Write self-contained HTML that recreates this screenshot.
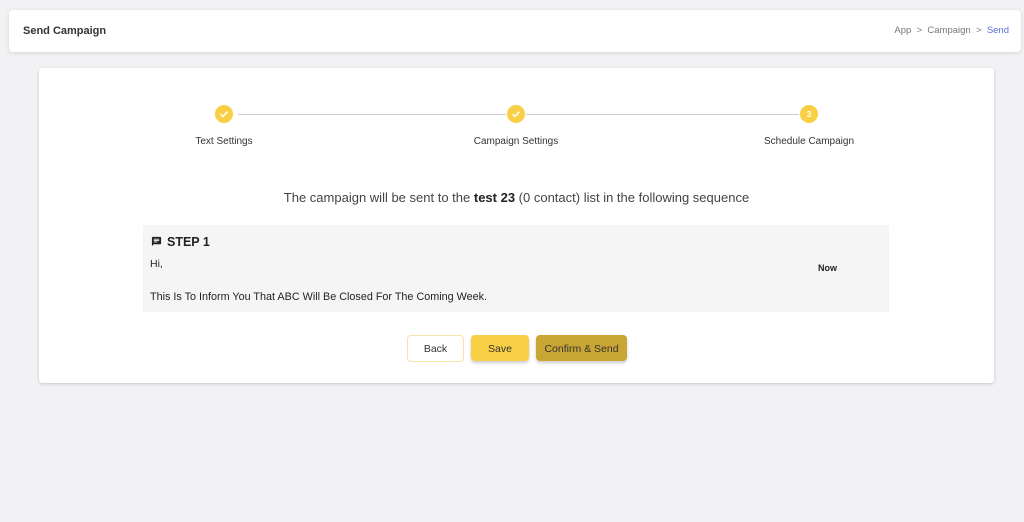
<!DOCTYPE html>
<html><head><style>
body{margin:0;width:1024px;height:522px;background:#f2f2f4;font-family:"Liberation Sans",sans-serif;position:relative;overflow:hidden;color:#222}
.hdr{position:absolute;left:9px;top:10px;width:1012px;height:42px;background:#fff;border-radius:4px;box-shadow:0 1px 4px rgba(0,0,0,.12)}
.hdr .t{position:absolute;left:14px;top:15px;font-size:11px;font-weight:bold;color:#333}
.bc{position:absolute;right:12px;top:15px;font-size:9.5px;color:#777}
.bc .s{color:#5b6fd6}
.card{position:absolute;left:39px;top:68px;width:955px;height:315px;background:#fff;border-radius:3px;box-shadow:0 1px 3px rgba(0,0,0,.18)}
.dot{position:absolute;width:18px;height:18px;border-radius:50%;background:#f8cf45;top:37px;color:#fff;font-size:8px;font-weight:bold;text-align:center;line-height:19px}
.line{position:absolute;top:46px;height:1px;background:#ccc}
.lbl{position:absolute;top:68px;font-size:10px;color:#333;transform:translateX(-50%);white-space:nowrap}
.msg{position:absolute;top:122px;left:0;width:955px;text-align:center;font-size:13px;color:#444}
.box{position:absolute;left:104px;top:157px;width:746px;height:87px;background:#f5f5f5}
.btn{position:absolute;top:267px;height:26px;border-radius:4px;font-size:10.5px;text-align:center;line-height:28px;color:#333;box-sizing:border-box}
</style></head><body>
<div class="hdr"><div class="t">Send Campaign</div><div class="bc">App &nbsp;&gt;&nbsp; Campaign &nbsp;&gt;&nbsp; <span class="s">Send</span></div></div>
<div class="card">
<div class="line" style="left:199px;width:268px"></div>
<div class="line" style="left:487px;width:273px"></div>
<div class="dot" style="left:176px"><svg width="18" height="18" viewBox="0 0 18 18"><path d="M5.5 9.2l2.4 2.3 4.6-4.8" stroke="#fff" stroke-width="1.5" fill="none"/></svg></div>
<div class="dot" style="left:468px"><svg width="18" height="18" viewBox="0 0 18 18"><path d="M5.5 9.2l2.4 2.3 4.6-4.8" stroke="#fff" stroke-width="1.5" fill="none"/></svg></div>
<div class="dot" style="left:761px">3</div>
<div class="lbl" style="left:185px">Text Settings</div>
<div class="lbl" style="left:477px">Campaign Settings</div>
<div class="lbl" style="left:770px">Schedule Campaign</div>
<div class="msg">The campaign will be sent to the <b style="color:#222">test 23</b> (0 contact) list in the following sequence</div>
<div class="box">
<svg style="position:absolute;left:8px;top:11px" width="11" height="11" viewBox="0 0 24 24"><path d="M20 2H4a2 2 0 0 0-2 2v18l4-4h14a2 2 0 0 0 2-2V4a2 2 0 0 0-2-2zM6 9h12v2H6zm8 5H6v-2h8zm4-6H6V6h12z" fill="#222"/></svg>
<div style="position:absolute;left:24px;top:10px;font-size:12.5px;font-weight:bold;color:#222">STEP 1</div>
<div style="position:absolute;left:7px;top:33px;font-size:10.5px">Hi,</div>
<div style="position:absolute;left:7px;top:66px;font-size:10.8px">This Is To Inform You That ABC Will Be Closed For The Coming Week.</div>
<div style="position:absolute;left:675px;top:38px;font-size:9px;font-weight:bold">Now</div>
</div>
<div class="btn" style="left:368px;width:57px;height:27px;border:1px solid #f7e2a8;background:#fff;line-height:27px">Back</div>
<div class="btn" style="left:432px;width:58px;background:#f8cf45;box-shadow:0 2px 3px rgba(0,0,0,.2)">Save</div>
<div class="btn" style="left:497px;width:91px;background:#c9a633;box-shadow:0 2px 3px rgba(0,0,0,.2)">Confirm &amp; Send</div>
</div>
</body></html>
